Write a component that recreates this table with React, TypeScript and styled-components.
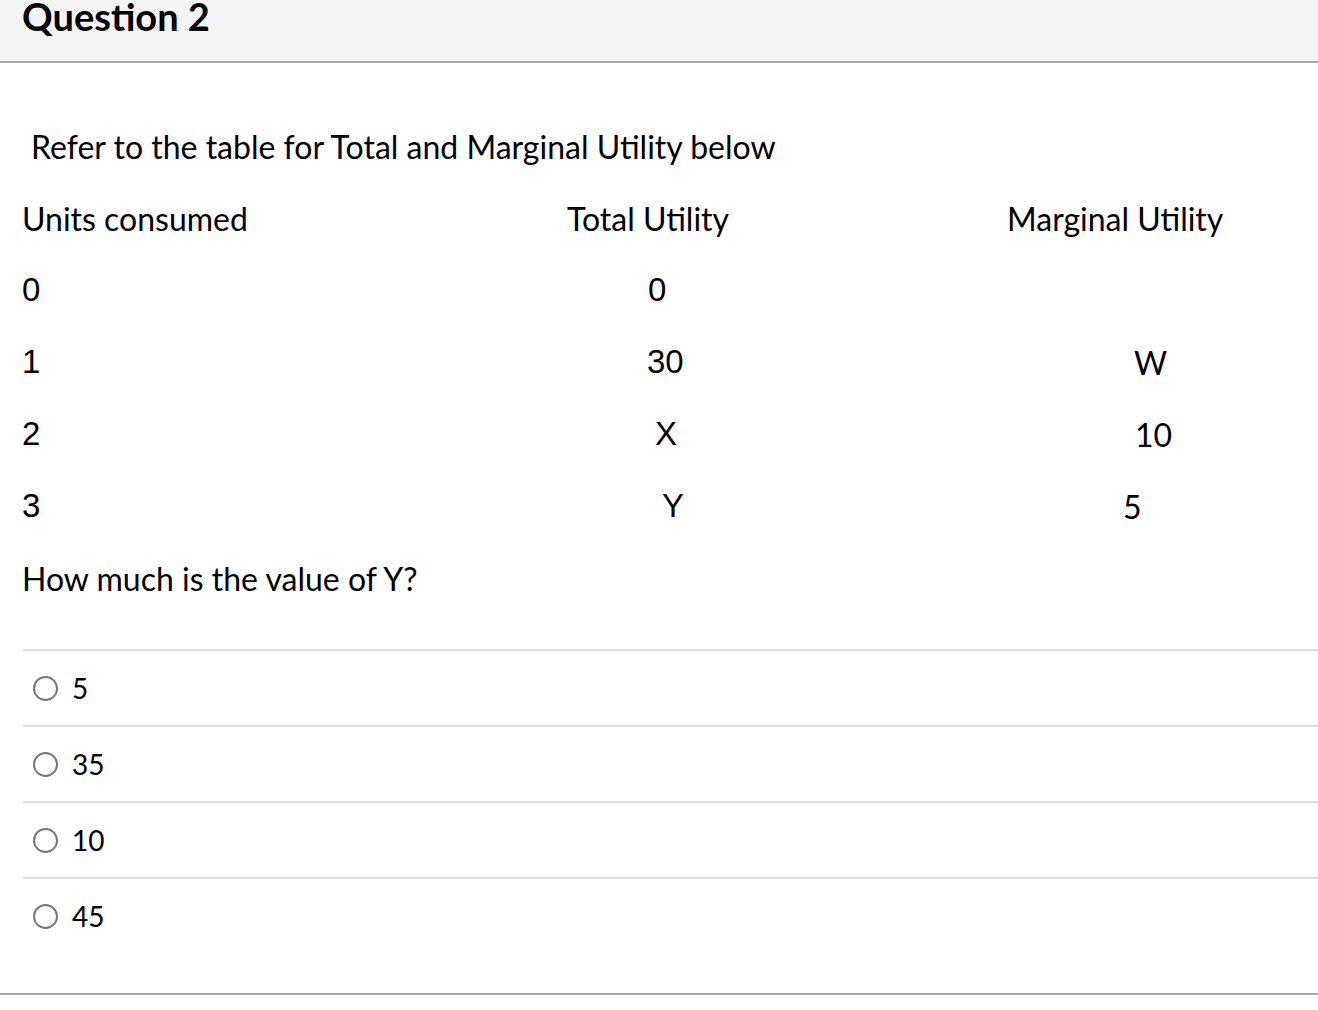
import React from "react";
import styled, { createGlobalStyle } from "styled-components";

const GlobalStyle = createGlobalStyle`
  html, body {
    margin: 0;
    padding: 0;
    background: #fff;
    font-family: Lato, "Open Sans", sans-serif;
    color: #000;
  }
`;

const Page = styled.div`
  width: 1318px;
  min-height: 1010px;
  background: #fff;
`;

const QuestionHeader = styled.header`
  height: 63px;
  box-sizing: border-box;
  background: #f4f4f4;
  border-bottom: 2px solid #aaa;
  padding-left: 22px;
  overflow: hidden;
`;

const Title = styled.h2`
  margin: -4px 0 0;
  font-size: 38px;
  line-height: 40px;
  font-weight: 700;
`;

const Body = styled.div`
  padding: 47px 0 0 22px;
`;

const Line = styled.p<{ $inset?: number }>`
  margin: 0;
  height: 72px;
  display: flex;
  align-items: center;
  padding-left: ${(p) => p.$inset ?? 0}px;
  font-size: 32px;
`;

const UtilityTable = styled.div`
  display: grid;
  grid-template-columns: 545px 440px 1fr;
  grid-auto-rows: 72px;
`;

const Cell = styled.div<{ $indent?: number; $arial?: boolean }>`
  display: flex;
  align-items: center;
  padding-left: ${(p) => p.$indent ?? 0}px;
  font-family: ${(p) =>
    p.$arial ? '"Liberation Sans", Arial, sans-serif' : "Lato, sans-serif"};
  font-size: ${(p) => (p.$arial ? "33px" : "32px")};
`;

const Answers = styled.div`
  margin-top: 35px;
  margin-left: 1px;
  border-top: 2px solid #ddd;
`;

const Answer = styled.label`
  display: flex;
  align-items: center;
  gap: 14px;
  height: 74px;
  padding-left: 10px;
  border-bottom: 2px solid #ddd;
  font-size: 28px;

  &:last-child {
    border-bottom: none;
  }
`;

const Radio = styled.span`
  width: 21px;
  height: 21px;
  border-radius: 50%;
  border: 2px solid #777;
  flex-shrink: 0;
`;

const Footer = styled.div`
  margin-top: 40px;
  border-top: 2px solid #aaa;
`;

const rows: {
  units: string;
  total: string;
  totalIndent: number;
  marginal: string;
  marginalIndent: number;
}[] = [
  { units: "0", total: "0", totalIndent: 81, marginal: "", marginalIndent: 0 },
  { units: "1", total: "30", totalIndent: 80, marginal: "W", marginalIndent: 127 },
  { units: "2", total: "X", totalIndent: 88, marginal: "10", marginalIndent: 128 },
  { units: "3", total: "Y", totalIndent: 95, marginal: "5", marginalIndent: 116 },
];

const answers = ["5", "35", "10", "45"];

export default function App() {
  return (
    <Page>
      <GlobalStyle />
      <QuestionHeader>
        <Title>Question 2</Title>
      </QuestionHeader>
      <Body>
        <Line $inset={9}>Refer to the table for Total and Marginal Utility below</Line>
        <UtilityTable>
          <Cell>Units consumed</Cell>
          <Cell>Total Utility</Cell>
          <Cell>Marginal Utility</Cell>
          {rows.map((r) => (
            <React.Fragment key={r.units}>
              <Cell $arial>{r.units}</Cell>
              <Cell $arial $indent={r.totalIndent}>
                {r.total}
              </Cell>
              <Cell $indent={r.marginalIndent}>{r.marginal}</Cell>
            </React.Fragment>
          ))}
        </UtilityTable>
        <Line>How much is the value of Y?</Line>
        <Answers>
          {answers.map((a) => (
            <Answer key={a}>
              <Radio />
              {a}
            </Answer>
          ))}
        </Answers>
      </Body>
      <Footer />
    </Page>
  );
}
